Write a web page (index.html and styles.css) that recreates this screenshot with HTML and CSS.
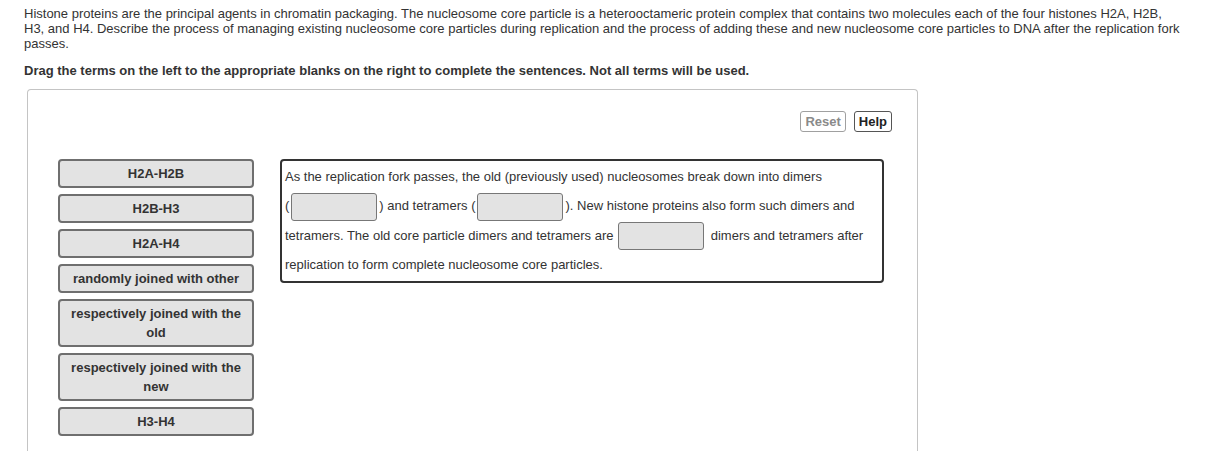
FILE: index.html
```html
<!DOCTYPE html>
<html lang="en">
<head>
    <meta charset="UTF-8">
    <meta name="viewport" content="width=device-width, initial-scale=1.0">
    <title>Nucleosome assembly</title>
    <link rel="stylesheet" href="styles.css">
</head>
<body>
    <div class="question">
        <p class="prompt">Histone proteins are the principal agents in chromatin packaging. The nucleosome core particle is a heterooctameric protein complex that contains two molecules each of the four histones H2A, H2B, H3, and H4. Describe the process of managing existing nucleosome core particles during replication and the process of adding these and new nucleosome core particles to DNA after the replication fork passes.</p>
        <p class="instructions">Drag the terms on the left to the appropriate blanks on the right to complete the sentences. Not all terms will be used.</p>

        <div class="dnd-panel">
            <div class="toolbar">
                <button type="button" class="btn btn-reset">Reset</button>
                <button type="button" class="btn btn-help">Help</button>
            </div>

            <div class="dnd-body">
                <ul class="term-bank">
                    <li class="term">H2A-H2B</li>
                    <li class="term">H2B-H3</li>
                    <li class="term">H2A-H4</li>
                    <li class="term">randomly joined with other</li>
                    <li class="term">respectively joined with the old</li>
                    <li class="term">respectively joined with the new</li>
                    <li class="term">H3-H4</li>
                </ul>

                <!-- blanks stay glued to their brackets so a line never breaks between them -->
                <div class="sentences">
                    As the replication fork passes, the old (previously used) nucleosomes break down into dimers
                    <span class="slot">(<span class="blank"></span>)</span> and tetramers <span class="slot">(<span class="blank"></span>).</span> New histone proteins also form such dimers and
                    tetramers. The old core particle dimers and tetramers are <span class="blank blank-gap"></span> dimers and tetramers after
                    replication to form complete nucleosome core particles.
                </div>
            </div>
        </div>
    </div>
</body>
</html>
```

FILE: styles.css
```css
body {
    margin: 0;
    background-color: #fff;
    color: #333;
    font-family: "Liberation Sans", Arial, sans-serif;
    font-size: 13px;
}

.question {
    padding: 6px 24px 0 24px;
}

.prompt {
    margin: 0;
    line-height: 15px;
}

.instructions {
    margin: 12px 0 11px 0;
    line-height: 15px;
    font-weight: bold;
}

.dnd-panel {
    width: 834px;
    margin-left: 3px;
    border: 1px solid #c4c4c4;
    border-bottom: none;
    border-radius: 4px 4px 0 0;
    padding: 21px 25px 40px 30px;
}

.toolbar {
    display: flex;
    justify-content: flex-end;
    gap: 8px;
}

.btn {
    height: 21px;
    padding: 0 4px;
    background-color: #fff;
    border: 1px solid #999;
    border-radius: 3px;
    font-family: inherit;
    font-size: 13px;
    font-weight: bold;
    line-height: 19px;
    cursor: pointer;
}

.btn-reset {
    color: #8a8a8a;
    border-color: #a0a0a0;
}

.btn-help {
    color: #222;
    border-color: #555;
}

.dnd-body {
    display: flex;
    align-items: flex-start;
    gap: 26px;
    margin-top: 27px;
}

.term-bank {
    list-style: none;
    margin: 0;
    padding: 0;
    width: 196px;
    display: flex;
    flex-direction: column;
    gap: 6px;
}

.term {
    background-color: #e3e3e3;
    border: 2px solid #6f6f6f;
    border-radius: 4px;
    padding: 3px 8px;
    line-height: 19px;
    text-align: center;
    font-weight: bold;
    color: #333;
}

.sentences {
    width: 595px;
    border: 2px solid #333;
    border-radius: 4px;
    padding: 1px 2px 2px 3px;
    line-height: 29px;
}

.slot {
    white-space: nowrap;
}

.blank {
    display: inline-block;
    width: 84px;
    height: 26px;
    margin: 0 2px;
    vertical-align: middle;
    background-color: #e3e3e3;
    border: 1px solid #777;
    border-radius: 3px;
}

.blank-gap {
    margin: 0 3px 0 1px;
}
```
